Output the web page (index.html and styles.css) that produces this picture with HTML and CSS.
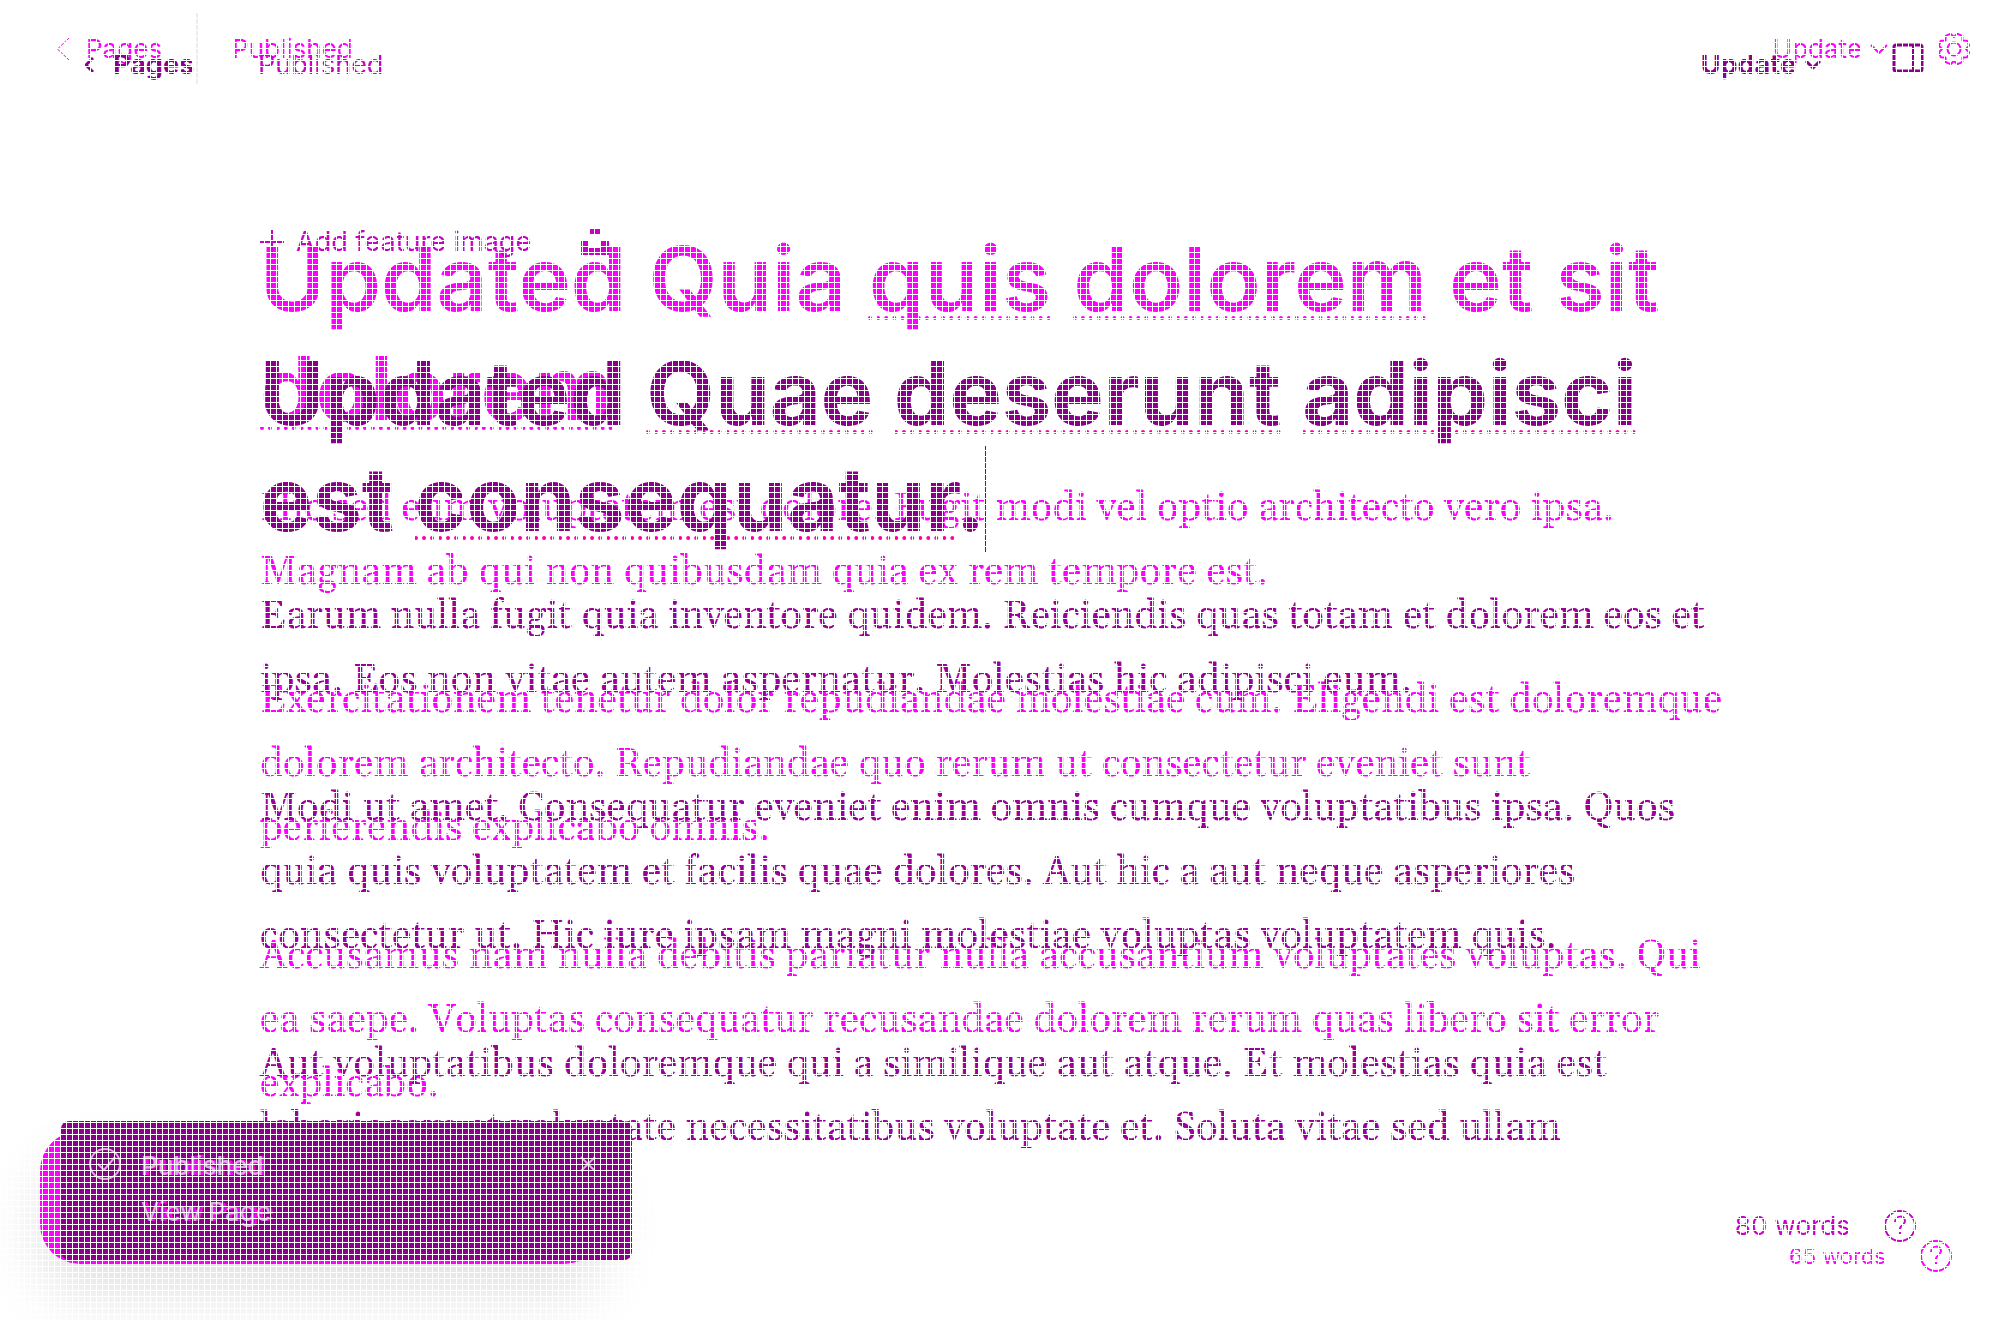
FILE: index.html
```html
<!DOCTYPE html>
<html lang="en">
<head>
<meta charset="utf-8">
<title>Pages – Editor comparison</title>
<link rel="stylesheet" href="styles.css">
</head>
<body>
<main class="compare">
  <section class="layer layer-before">
    <header class="bar">
      <a class="back" href="#"><svg class="chevron-left" viewBox="0 0 14 24"><path d="M13 1 1.500 12 13 23"/></svg>Pages</a>
      <span class="divider"></span>
      <span class="status">Published</span>
      <div class="actions">
        <button class="update">Update<svg class="chevron-down" viewBox="0 0 18 10"><path d="m1 1 8 8 8-8"/></svg></button>
        <button class="icon-button" aria-label="Settings"><svg class="icon-large gear" viewBox="0 0 32 32"><path transform="rotate(22.500 16 16)" d="M13.300.7h5.400l1.900 4.200 4.300-1.600 3.800 3.800-1.600 4.300 4.200 1.900v5.400l-4.200 1.900 1.600 4.300-3.800 3.800-4.300-1.600-1.900 4.200h-5.400l-1.900-4.200-4.300 1.600-3.800-3.800 1.600-4.300-4.200-1.900v-5.400l4.200-1.900-1.600-4.300 3.800-3.800 4.300 1.600z"/><circle cx="16" cy="16" r="6.500"/></svg></button>
      </div>
    </header>
    <article class="canvas">
      <h1 class="title">Updated Quia <span class="spell">quis</span> <span class="spell">dolorem</span> et sit<br><span class="spell">dolorem</span></h1>
      <div class="prose">
        <p>Hic sed eum voluptatem est dolore. Fugit modi vel optio architecto vero ipsa.<br>Magnam ab qui non quibusdam quia ex rem tempore est.</p>
        <p>Exercitationem tenetur dolor repudiandae molestiae cum. Eligendi est doloremque<br>dolorem architecto. Repudiandae quo rerum ut consectetur eveniet sunt<br>perferendis explicabo omnis.</p>
        <p>Accusamus nam nulla debitis pariatur nulla accusantium voluptates voluptas. Qui<br>ea saepe. Voluptas consequatur recusandae dolorem rerum quas libero sit error<br>explicabo.</p>
      </div>
    </article>
    <div class="toast-back"></div>
    <footer class="count">65 words<button class="icon-button" aria-label="Help"><svg class="icon-large" viewBox="0 0 32 32"><circle cx="16" cy="16" r="15"/><path d="M11 12c0-7 10-7 10-1 0 4-5 4-5 8m0 3v2"/></svg></button></footer>
  </section>

  <section class="layer layer-after">
    <header class="bar">
      <a class="back" href="#"><svg class="chevron-left" viewBox="0 0 10 16"><path d="M9 1 2 8l7 7"/></svg>Pages</a>
      <span class="status">Published</span>
      <div class="actions">
        <button class="update">Update<svg class="chevron-down" viewBox="0 0 18 10"><path d="m2 1 7 7 7-7"/></svg></button>
        <button class="icon-button panel" aria-label="Toggle sidebar"><svg class="icon-large" viewBox="0 0 32 28"><rect x="2" y="1" width="28" height="26" rx="2"/><path class="thin" d="M21 1v26"/></svg></button>
      </div>
    </header>
    <article class="canvas">
      <div class="feature">
        <button class="add"><svg class="plus" viewBox="0 0 24 24"><path d="M12 0v24M0 12h24"/></svg>Add feature image</button>
        <button class="icon-button" aria-label="Unsplash"><svg class="unsplash" viewBox="0 0 28 28"><path d="M9 1h10v6H9zM0 13h8v7h12v-7h8v14H0z"/></svg></button>
      </div>
      <h1 class="title">Updated <span class="spell">Quae</span> <span class="spell">deserunt</span> <span class="spell">adipisci</span><br>est <span class="spell">consequatur</span>.<span class="caret"></span></h1>
      <div class="prose">
        <p>Earum nulla fugit quia inventore quidem. Reiciendis quas totam et dolorem eos et<br>ipsa. Eos non vitae autem aspernatur. Molestias hic adipisci eum.</p>
        <p>Modi ut amet. Consequatur eveniet enim omnis cumque voluptatibus ipsa. Quos<br>quia quis voluptatem et facilis quae dolores. Aut hic a aut neque asperiores<br>consectetur ut. Hic iure ipsam magni molestiae voluptas voluptatem quis.</p>
        <p>Aut voluptatibus doloremque qui a similique aut atque. Et molestias quia est<br>laboriosam et voluptate necessitatibus voluptate et. Soluta vitae sed ullam</p>
      </div>
    </article>
    <aside class="toast">
      <svg class="icon-large" viewBox="0 0 32 32"><circle cx="16" cy="16" r="15"/><path d="m9 16 6 6 11-13"/></svg>
      <div class="toast-text"><strong>Published</strong><a href="#">View Page</a></div>
      <button class="icon-button" aria-label="Close"><svg class="close" viewBox="0 0 16 16"><path d="m1 1 14 14M15 1 1 15"/></svg></button>
    </aside>
    <footer class="count">80 words<button class="icon-button" aria-label="Help"><svg class="icon-large" viewBox="0 0 32 32"><circle cx="16" cy="16" r="15"/><path d="M11 12c0-7 10-7 10-1 0 4-5 4-5 8m0 3v2"/></svg></button></footer>
  </section>

  <div class="mesh"></div>
</main>
</body>
</html>
```
FILE: styles.css
```css
* { box-sizing: border-box; }
body { margin: 0; background: #fff; font: 26px/36px Inter, sans-serif; }
.compare { display: grid; height: 100vh; overflow: hidden; }
.layer { grid-area: 1 / 1; position: relative; min-width: 0; min-height: 0; overflow: hidden; }
.layer-before { color: #f0f; }
.layer-after { color: #8b008b; font-size: 27px; }

/* White mesh that runs over both layers */
.mesh {
  grid-area: 1 / 1;
  z-index: 2;
  pointer-events: none;
  background:
    repeating-linear-gradient(to right, #fff 0 1px, transparent 1px 6px),
    repeating-linear-gradient(to bottom, #fff 0 1px, transparent 1px 6px);
}

svg { display: block; flex: none; fill: none; stroke: currentColor; stroke-width: 2; stroke-linejoin: round; }
button { display: flex; align-items: center; padding: 0; border: 0; background: none; color: inherit; font: inherit; }
.icon-large { width: 32px; height: 32px; }

/* Top bar */
.bar { display: flex; align-items: center; height: 98px; padding: 0 30px 0 56px; }
.layer-after .bar { height: 130px; padding: 0 76px 0 84px; }
.back { display: flex; align-items: center; gap: 16px; color: inherit; text-decoration: none; }
.layer-after .back { gap: 19px; font-weight: 700; }
.chevron-left { width: 14px; height: 24px; stroke-width: 1; }
.layer-after .chevron-left { width: 10px; height: 16px; }
.divider { width: 2px; height: 72px; margin: 0 34px 0 34px; background: #e5eff5; }
.layer-after .status { margin-left: 64px; color: #c800c8; }
.actions { display: flex; align-items: center; gap: 50px; margin-left: auto; }
.layer-after .actions { gap: 70px; }
.update { gap: 8px; }
.layer-after .update { font-weight: 700; }
.chevron-down { width: 18px; height: 10px; stroke-width: 1; }
.layer-before .chevron-down { stroke-width: 2; }
.layer-after .chevron-left, .layer-after .chevron-down { stroke-width: 3; }
.panel { padding-bottom: 14px; }
.panel svg { stroke-width: 3; }
.panel .thin { stroke-width: 2; }

/* Post */
.canvas { padding: 126px 200px 0 260px; }
.layer-after .canvas { padding-top: 94px; }
.feature { display: flex; align-items: center; gap: 50px; color: #c800c8; }
.add { gap: 12px; }
.plus { width: 24px; height: 24px; }
.unsplash { width: 28px; height: 28px; fill: currentColor; stroke: none; }
.title { margin: 0 0 33px; font-size: 89px; line-height: 110px; font-weight: 600; white-space: nowrap; }
.layer-after .title { margin-top: 80px; font-size: 88px; line-height: 106px; font-weight: 700; }
.spell { text-decoration: underline dotted 4px #f0f; text-underline-offset: 5px; text-decoration-skip-ink: none; }
.layer-after .spell { text-decoration-color: #ff00a8; }
.caret { border-left: 1px solid #8b008b; }
.prose { font: 40px/64px Gelasio, Georgia, "Liberation Serif", serif; white-space: nowrap; }
.prose p { margin: 0 0 64px; }
.layer-after .prose { color: #9b009b; }

/* Toasts float over the post */
.toast, .toast-back { position: absolute; display: flex; }
.toast-back { left: 40px; bottom: 56px; width: 564px; height: 133px; border-radius: 40px; background: #f0f; box-shadow: 0 32px 60px rgba(0, 0, 0, .12); }
.toast { left: 61px; bottom: 60px; width: 571px; padding: 27px 36px 30px 28px; align-items: flex-start; gap: 20px; border-radius: 8px; background: #8b008b; color: #e6a6e6; font-size: 26px; }
.toast svg { stroke-width: 2; }
.toast-text { display: flex; flex: 1; flex-direction: column; gap: 10px; text-shadow: 3px 0 #f0f; }
.toast strong { font-weight: 500; }
.toast a { color: inherit; align-self: flex-start; text-underline-offset: 3px; text-decoration-thickness: 1px; }
.toast .icon-button { padding-top: 8px; }
.close { width: 16px; height: 16px; }

/* Word count */
.count { position: absolute; right: 48px; bottom: 48px; display: flex; align-items: center; gap: 34px; font-size: 22px; line-height: 32px; }
.layer-after .count { right: 84px; bottom: 78px; font-size: 26px; color: #c800c8; }
```
